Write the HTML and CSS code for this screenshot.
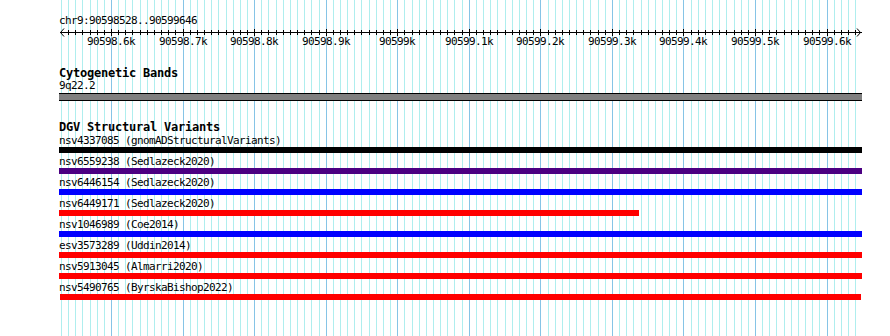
FILE: index.html
```html
<!DOCTYPE html>
<html lang="en">
<head>
    <meta charset="UTF-8">
    <title>chr9:90598528..90599646</title>
    <link rel="stylesheet" href="styles.css">
</head>
<body>
    <div class="panel">
        <svg class="grid" id="grid" width="890" height="336"></svg>
        <div class="ruler">
            <div class="ruler-label">chr9:90598528..90599646</div>
            <svg class="axis" id="axis" width="890" height="21"></svg>
        </div>
        <div class="track">
            <div class="track-title">Cytogenetic Bands</div>
            <div class="feat-label">9q22.2</div>
            <div class="band"></div>
        </div>
        <div class="track dgv">
            <div class="track-title">DGV Structural Variants</div>
            <div class="variants" id="variants"></div>
        </div>
    </div>
<script>
var START = 90598528, END = 90599646;
var SCALE = 800 / (END - START);
var NS = "http://www.w3.org/2000/svg";

function px(bp){   // genome position -> page x
    var x = Math.round(59.5 + (bp - START) * SCALE);
    return Math.max(59, Math.min(862, x));
}
function el(tag, attrs){
    var e = document.createElementNS(NS, tag);
    for (var k in attrs) e.setAttribute(k, attrs[k]);
    return e;
}

// grid + ruler ticks, every 10bp, major every 100bp
var grid = document.getElementById("grid");
var axis = document.getElementById("axis");
axis.appendChild(el("rect", {x: 60, y: 5, width: 802, height: 1, fill: "#000"}));
axis.appendChild(el("path", {d: "M64 1.5 L60.5 5.5 L64 9.5", stroke: "#000", fill: "none"}));
axis.appendChild(el("path", {d: "M857 1.5 L860.5 5.5 L857 9.5", stroke: "#000", fill: "none"}));
for (var bp = Math.ceil(START / 10) * 10; bp <= END; bp += 10){
    var x = px(bp);
    var major = bp % 100 === 0;
    grid.appendChild(el("rect", {x: x, y: 0, width: 1, height: 336, fill: major ? "#86c4e6" : "#afeeee"}));
    if (x > 62 && x < 858){
        axis.appendChild(el("rect", {x: x, y: major ? 2 : 3, width: 1, height: major ? 7 : 5, fill: "#000"}));
    }
    if (major){
        var t = el("text", {x: x, y: 18, "text-anchor": "middle"});
        t.textContent = (bp / 1000).toFixed(1).replace(".0", "") + "k";
        axis.appendChild(t);
    }
}

// DGV features
var variants = [
    ["nsv4337085", "gnomADStructuralVariants", "#000000", 90598000, 90600000],
    ["nsv6559238", "Sedlazeck2020", "#4b0082", 90598000, 90600000],
    ["nsv6446154", "Sedlazeck2020", "#0000ff", 90598000, 90600000],
    ["nsv6449171", "Sedlazeck2020", "#ff0000", 90598000, 90599338],
    ["nsv1046989", "Coe2014", "#0000ff", 90598000, 90600000],
    ["esv3573289", "Uddin2014", "#ff0000", 90598000, 90600000],
    ["nsv5913045", "Almarri2020", "#ff0000", 90598000, 90600000],
    ["nsv5490765", "ByrskaBishop2022", "#ff0000", 90598529, 90599648]
];
var list = document.getElementById("variants");
for (var i = 0; i < variants.length; i++){
    var v = variants[i];
    var row = document.createElement("div");
    row.className = "variant";
    var label = document.createElement("div");
    label.className = "feat-label";
    label.textContent = v[0] + " (" + v[1] + ")";
    var bar = document.createElement("div");
    bar.className = "bar";
    bar.style.background = v[2];
    bar.style.marginLeft = (px(v[3]) - 59) + "px";
    bar.style.width = (px(v[4]) - px(v[3])) + "px";
    row.appendChild(label);
    row.appendChild(bar);
    list.appendChild(row);
}
</script>
</body>
</html>
```
FILE: styles.css
```css
body{
    margin: 0;
    background: #fff;
    font-family: "DejaVu Sans Mono", "Liberation Mono", monospace;
    color: #000;
}
.panel{
    position: relative;
    z-index: 0;
    width: 890px;
    height: 336px;
    padding-left: 59px;
    box-sizing: border-box;
    overflow: hidden;
}
.grid{
    position: absolute;
    left: 0;
    top: 0;
    z-index: -1;
    shape-rendering: crispEdges;
}
.ruler{
    padding-top: 15px;
}
.ruler-label,.feat-label{
    font-size: 11px;
    line-height: 12px;
    letter-spacing: -0.62px;
    white-space: nowrap;
}
.axis{
    display: block;
    margin-left: -59px;
    font-family: "DejaVu Sans Mono", monospace;
    font-size: 11px;
    letter-spacing: -0.62px;
}
.track-title{
    margin-top: 20px;
    margin-bottom: 1px;
    font-size: 12px;
    line-height: 11px;
    font-weight: bold;
    letter-spacing: -0.22px;
    white-space: nowrap;
}
.dgv .track-title{
    margin-top: 21px;
}
.band{
    width: 803px;
    height: 6px;
    margin-top: 1px;
    background: #808080;
    border-top: 1px solid #000;
    border-bottom: 1px solid #000;
}
.variants{
    margin-top: 2px;
}
.variant{
    margin-bottom: 3px;
}
.bar{
    height: 6px;
}
```
